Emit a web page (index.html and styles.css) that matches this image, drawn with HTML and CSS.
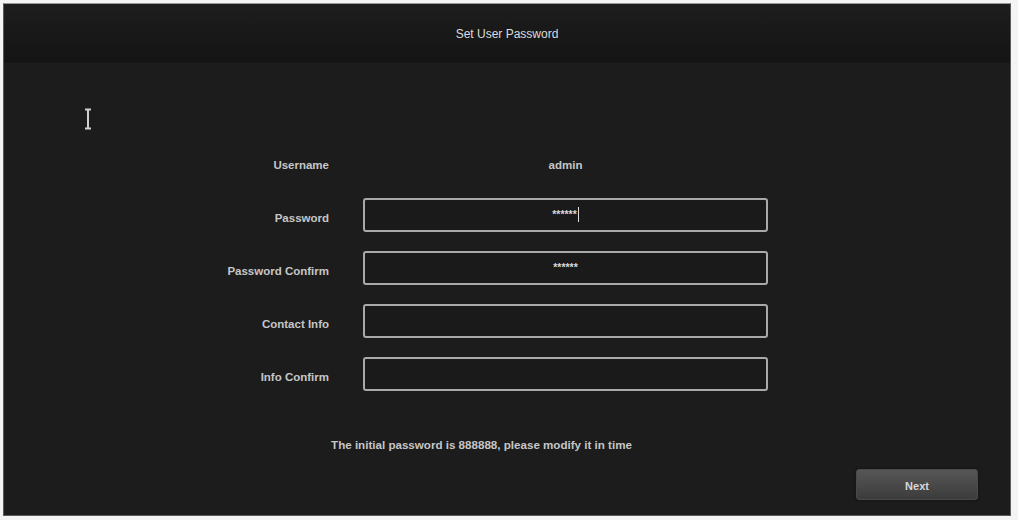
FILE: index.html
```html
<!DOCTYPE html>
<html lang="en">
<head>
  <meta charset="UTF-8">
  <title>Set User Password</title>
  <link rel="stylesheet" href="styles.css">
</head>
<body>
  <div class="panel">
    <div class="header">Set User Password</div>

    <!-- mouse pointer (I-beam) -->
    <svg class="ibeam" width="10" height="22" viewBox="0 0 10 22">
      <path d="M2 1.5h6M5 1.5v19M2 20.5h6" stroke="#d0d0d0" stroke-width="2" fill="none"/>
    </svg>

    <div class="form">
      <div class="label">Username</div>
      <div class="value">admin</div>

      <div class="label">Password</div>
      <div class="field"><span class="stars">******</span><span class="caret"></span></div>

      <div class="label">Password Confirm</div>
      <div class="field"><span class="stars">******</span></div>

      <div class="label">Contact Info</div>
      <div class="field"></div>

      <div class="label">Info Confirm</div>
      <div class="field"></div>
    </div>

    <p class="notice">The initial password is 888888, please modify it in time</p>

    <div class="actions">
      <button class="btn">Next</button>
    </div>
  </div>
</body>
</html>
```

FILE: styles.css
```css
body { margin: 0; background: #f4f4f4; font-family: "Liberation Sans", Arial, sans-serif; }
.panel { position: relative; margin: 3px 7px 4px 3px; height: 511px; background: #1c1c1c; border: 1px solid #5a5a5a; border-top-color: #9a9a9a; display: flex; flex-direction: column; }
.header { height: 58px; line-height: 60px; text-align: center; color: #dcdcdc; font-size: 12px; background: linear-gradient(#1d1d1d, #141414); border-bottom: 1px solid #161616; }
.ibeam { position: absolute; left: 79px; top: 104px; }
.form { display: grid; grid-template-columns: 325px 405px; grid-auto-rows: 34px; column-gap: 34px; row-gap: 19px; margin-top: 82px; }
.label { display: flex; align-items: center; justify-content: flex-end; padding-top: 6px; color: #c6c6c6; font-size: 11.5px; font-weight: bold; }
.value { display: flex; align-items: center; justify-content: center; padding-top: 5px; color: #c6c6c6; font-size: 11.5px; font-weight: bold; }
.field { display: flex; align-items: center; justify-content: center; border: 2px solid #a9a9a9; border-radius: 3px; background: #1a1a1a; color: #d8d8d8; }
.stars { font-size: 10.5px; font-weight: bold; margin-top: -3px; }
.caret { width: 1px; height: 15px; background: #e0e0e0; margin-left: 1px; margin-top: -1px; }
.notice { margin: 47px 51px 0 0; text-align: center; color: #c6c6c6; font-size: 11.6px; font-weight: bold; line-height: 14px; }
.actions { display: flex; justify-content: flex-end; padding: 17px 32px 0 0; }
.btn { width: 122px; height: 31px; padding-top: 3px; border: 1px solid #4a4a4a; border-radius: 3px; background: linear-gradient(#565656, #3c3c3c); color: #d8d8d8; font-family: inherit; font-size: 11px; font-weight: bold; box-shadow: 0 0 3px #111; }
```
